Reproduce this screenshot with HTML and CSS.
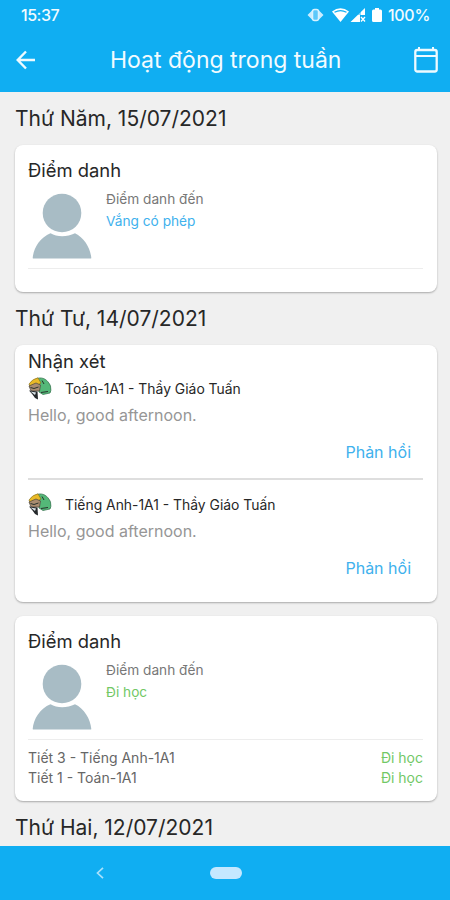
FILE: index.html
```html
<!DOCTYPE html>
<html lang="vi">
<head>
<meta charset="utf-8">
<title>Hoạt động trong tuần</title>
<link rel="stylesheet" href="styles.css">
</head>
<body>
<svg class="defs" width="0" height="0" aria-hidden="true">
  <symbol id="person" viewBox="0 0 60 66">
    <circle cx="30" cy="20" r="19.3"/>
    <path d="M.7 65C1.500 55 8 44.500 18.500 40.300C25 44.200 35 44.200 43 40.300C52 44.500 58.500 55 59.300 65Q59.300 65.500 58.300 65.500H1.700Q.7 65.500 .7 65Z"/>
  </symbol>
  <symbol id="mascot" viewBox="0 0 24 24">
    <path d="M9 1.500C15-.5 20 3 22.500 9Q23.500 14 22 16L15 17.500 11 15Z" fill="#54b878" stroke="#2f6b48" stroke-width=".7"/>
    <path d="M1 7Q4 2 10 .8L13 6 8 9 2 10Z" fill="#e9ba27" stroke="#7b661c" stroke-width=".6"/>
    <path d="M1 9L8 6 12.500 8 11.500 14 3 14Z" fill="#a98c70" stroke="#4b453c" stroke-width=".7"/>
    <path d="M2.500 10.500L6 11.500 10.500 10M14 3.500L16 7M13 15.500L20 14.500" fill="none" stroke="#28332c" stroke-width="1"/>
    <path d="M1 13.500L9.500 14.500 10 22.500 7 21 4.500 17.500Z" fill="#25292c"/>
    <path d="M2.500 14.500L8 15.500 7 18Z" fill="#dce5ea"/>
  </symbol>
</svg>
<div class="screen">
  <header class="header">
    <div class="status">
      <span class="clock">15:37</span>
      <svg class="status-icons" width="78" height="18" viewBox="0 0 78 18">
        <path d="M5 4.500L.5 9 5 13.500ZM12 4.500L16.500 9 12 13.500Z" fill="#c9ecff"/>
        <rect x="5.500" y="3.500" width="6" height="11" rx="2" fill="#5cc8fa" stroke="#d8f2ff" stroke-width="1.500"/>
        <path d="M25 5.500Q33.500-.8 42 5.500L33.500 16Z" fill="#fff"/>
        <path d="M27.500 6.300Q33.500 3 39.500 6.300" fill="none" stroke="#10aef2" stroke-width="1.300"/>
        <path d="M58 2V9H53V16H43.500Z" fill="#fff"/>
        <path d="M51 7L54 5V9H51Z" fill="#10aef2" opacity=".45"/>
        <path d="M54 11L58 15.500M58 11L54 15.500" stroke="#fff" stroke-width="1.300"/>
        <path d="M68 2H72V3.500H73.500Q75 3.500 75 5V14.500Q75 16 73.500 16H66.500Q65 16 65 14.500V5Q65 3.500 66.500 3.500H68Z" fill="#fff"/>
      </svg>
      <span class="battery">100%</span>
    </div>
    <div class="appbar">
      <svg class="back" width="20" height="20" viewBox="0 0 20 20"><path d="M19 10H2M10 1.500L1.700 10 10 18.500" fill="none" stroke="#eefaff" stroke-width="2.400"/></svg>
      <h1 class="title">Hoạt động trong tuần</h1>
      <svg class="calendar" width="24" height="28" viewBox="0 0 24 28"><path d="M5 1V5M19 1V5M1.500 10H22.500" stroke="#eefaff" stroke-width="2"/><rect x="1.300" y="4" width="21.400" height="21.500" rx="2" fill="none" stroke="#eefaff" stroke-width="2.300"/></svg>
    </div>
  </header>
  <main class="content">
    <h2 class="day">Thứ Năm, 15/07/2021</h2>
    <section class="card absent">
      <h3 class="card-title">Điểm danh</h3>
      <div class="attendance">
        <svg class="avatar" width="60" height="66"><use href="#person"/></svg>
        <div class="info"><p>Điểm danh đến</p><p class="blue">Vắng có phép</p></div>
      </div>
    </section>
    <h2 class="day">Thứ Tư, 14/07/2021</h2>
    <section class="card comments">
      <h3 class="card-title">Nhận xét</h3>
      <article class="comment">
        <div class="teacher"><svg width="24" height="24"><use href="#mascot"/></svg><span>Toán-1A1 - Thầy Giáo Tuấn</span></div>
        <p class="message">Hello, good afternoon.</p>
        <a class="reply">Phản hồi</a>
      </article>
      <article class="comment">
        <div class="teacher"><svg width="24" height="24"><use href="#mascot"/></svg><span>Tiếng Anh-1A1 - Thầy Giáo Tuấn</span></div>
        <p class="message">Hello, good afternoon.</p>
        <a class="reply">Phản hồi</a>
      </article>
    </section>
    <section class="card present">
      <h3 class="card-title">Điểm danh</h3>
      <div class="attendance">
        <svg class="avatar" width="60" height="66"><use href="#person"/></svg>
        <div class="info"><p>Điểm danh đến</p><p class="green">Đi học</p></div>
      </div>
      <div class="lessons">
        <div class="lesson"><span>Tiết 3 - Tiếng Anh-1A1</span><span class="green">Đi học</span></div>
        <div class="lesson"><span>Tiết 1 - Toán-1A1</span><span class="green">Đi học</span></div>
      </div>
    </section>
    <h2 class="day">Thứ Hai, 12/07/2021</h2>
  </main>
  <nav class="nav">
    <svg class="nav-back" width="8" height="12" viewBox="0 0 8 12"><path d="M7 .8L1.500 6 7 11.200" fill="none" stroke="#a9e0fb" stroke-width="1.700"/></svg>
    <span class="home"></span>
  </nav>
</div>
</body>
</html>
```
FILE: styles.css
```css
* { box-sizing: border-box; }
body { margin: 0; font-family: Inter, "Noto Sans", sans-serif; color: #272727; }
h1, h2, h3, p { margin: 0; font-weight: 400; }
svg { display: block; flex: none; }
.defs { position: absolute; }
.screen { width: 450px; height: 900px; display: flex; flex-direction: column; overflow: hidden; background: #f0f0f0; white-space: nowrap; }
.header { height: 92px; flex: none; background: #10aef2; color: #f2fbff; }
.status { height: 30px; display: flex; align-items: center; padding: 0 20px 0 21px; font-size: 16px; font-weight: 500; }
.clock { margin-right: auto; letter-spacing: -.5px; }
.status-icons { margin-right: 3px; }
.battery { width: 42px; letter-spacing: -.3px; }
.appbar { height: 60px; display: flex; align-items: center; padding: 0 12px 0 16px; }
.title { flex: 1; padding-left: 74px; font-size: 23px; line-height: 30px; }
.content { flex: 1; min-height: 0; padding: 0 13px 0 15px; }
.day { height: 53px; font-size: 21px; line-height: 53px; }
.card { padding: 0 14px 0 13px; background: #fff; border-radius: 8px; box-shadow: 0 1px 2px rgba(0, 0, 0, .3); }
.card-title { height: 22px; font-size: 18.400px; line-height: 23px; }
.absent { height: 147px; padding-top: 14px; }
.attendance { height: 88px; display: flex; padding: 12px 0 0 4px; border-bottom: 1px solid #ededed; }
.avatar { fill: #a8bcc5; }
.info { margin-top: -7px; padding: 2px 0 0 14px; font-size: 13.700px; line-height: 22px; color: #777; }
.blue { color: #40b1ed; }
.green { color: #72c866; }
.comments { height: 257px; margin-bottom: 14px; padding-top: 5px; }
.comment { height: 116px; }
.comment:first-of-type { height: 108px; padding-top: 5px; border-bottom: 2px solid #dedede; }
.comment:last-of-type { padding-top: 13px; }
.teacher { height: 24px; display: flex; align-items: center; gap: 13px; font-size: 13.900px; }
.message { height: 28px; line-height: 28px; font-size: 16px; color: #969696; }
.reply { display: block; margin: 12px 12px 0 0; font-size: 16px; line-height: 22px; text-align: right; color: #40b1ed; }
.present { height: 185px; padding-top: 14px; }
.lessons { padding-top: 8px; font-size: 14px; line-height: 19.500px; color: #666; }
.lesson { display: flex; justify-content: space-between; }
.nav { height: 54px; flex: none; display: flex; align-items: center; gap: 106px; padding-left: 96px; background: #10aef2; }
.home { width: 32px; height: 12px; border-radius: 6px; background: #c4e8ff; }
```
